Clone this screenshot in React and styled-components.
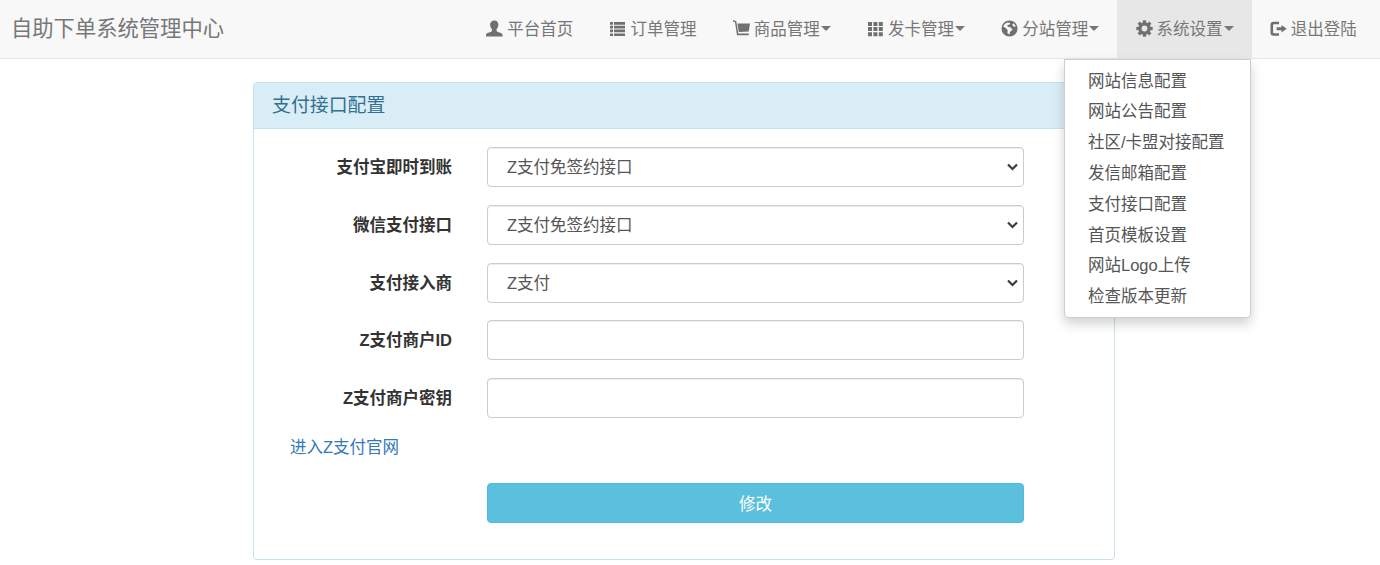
import React from "react";
import styled, { createGlobalStyle } from "styled-components";

const FONT = `"Liberation Sans", "Noto Sans CJK SC", sans-serif`;

const Global = createGlobalStyle`
  html, body { margin: 0; padding: 0; background: #fff; height: 100%; overflow: hidden; }
  body { font-family: ${FONT}; font-size: 16.5px; color: #333; }
  * { box-sizing: border-box; }
`;

const Page = styled.div`
  position: relative;
  width: 1380px;
  height: 565px;
  overflow: hidden;
`;

const Navbar = styled.nav`
  display: flex;
  align-items: stretch;
  justify-content: space-between;
  height: 59px;
  padding: 0 5px 0 11px;
  background: #f8f8f8;
  border-bottom: 1px solid #e7e7e7;
`;

const Brand = styled.a`
  align-self: center;
  margin-top: -6px;
  font-size: 21.3px;
  color: #777;
  white-space: nowrap;
`;

const NavList = styled.ul`
  display: flex;
  margin: 0;
  padding: 0;
  list-style: none;
`;

const NavItem = styled.li`
  position: relative;
  display: flex;
  align-items: center;
  gap: 4px;
  padding: 0 18.15px 2px;
  height: 58px;
  color: #777;
  white-space: nowrap;
  background: ${(p) => (p.$active ? "#e7e7e7" : "transparent")};
`;

const Caret = styled.span`
  display: inline-block;
  width: 0;
  height: 0;
  margin-left: -3px;
  margin-top: 1px;
  border-top: 5px solid #777;
  border-left: 5px solid transparent;
  border-right: 5px solid transparent;
`;

const IconSvg = styled.svg`
  display: block;
  width: 17px;
  height: 17px;
  fill: #707070;
  flex: none;
`;

const Dropdown = styled.ul`
  position: absolute;
  top: 59px;
  left: 1064px;
  z-index: 5;
  width: 187px;
  height: 259px;
  margin: 0;
  padding: 5.6px 0;
  list-style: none;
  background: #fff;
  border: 1px solid #cdcdcd;
  border-radius: 0 0 4px 4px;
  box-shadow: 0 6px 12px rgba(0, 0, 0, 0.175);
`;

const DropdownItem = styled.li`
  height: 30.8px;
  line-height: 30.8px;
  padding-left: 23px;
  color: #555;
  white-space: nowrap;
`;

const Main = styled.main`
  padding: 23px 0 0 253px;
`;

const Panel = styled.section`
  width: 862px;
  height: 478px;
  background: #fff;
  border: 1px solid #c5e4ee;
  border-radius: 4px;
  overflow: hidden;
`;

const PanelHeading = styled.h3`
  margin: 0;
  height: 46px;
  padding-left: 18px;
  line-height: 45px;
  font-size: 18.9px;
  font-weight: 400;
  color: #31708f;
  background: #d9edf7;
  border-bottom: 1px solid #c5e4ee;
`;

const Form = styled.form`
  display: flex;
  flex-direction: column;
  gap: 17.8px;
  padding: 18px 0 0 36px;
`;

const Row = styled.div`
  display: grid;
  grid-template-columns: 162px 537px;
  column-gap: 35px;
  align-items: center;
`;

const Label = styled.label`
  padding: 0 0 2px;
  text-align: right;
  font-weight: 700;
  color: #333;
  white-space: nowrap;
`;

const fieldCss = `
  display: block;
  width: 100%;
  height: 40px;
  background: #fff;
  border: 1px solid #ccc;
  border-radius: 4px;
  box-shadow: inset 0 1px 1px rgba(0, 0, 0, 0.075);
  color: #555;
  font-family: ${FONT};
  font-size: 16.5px;
  outline: none;
`;

const SelectWrap = styled.div`
  position: relative;
  width: 100%;
`;

const Select = styled.select`
  ${fieldCss}
  appearance: none;
  padding: 0 19px;
`;

const Chevron = styled.svg`
  position: absolute;
  top: 16px;
  right: 6px;
  width: 11px;
  height: 8px;
  fill: none;
  stroke: #3c3c3c;
  stroke-width: 2.2;
  pointer-events: none;
`;

const Input = styled.input`
  ${fieldCss}
  padding: 0 19px;
`;

const ExternalLink = styled.a`
  display: block;
  margin-top: -0.5px;
  height: 24px;
  line-height: 24px;
  color: #337ab7;
  white-space: nowrap;
`;

const SubmitRow = styled(Row)`
  margin-top: 6px;
`;

const Submit = styled.button`
  display: block;
  width: 100%;
  height: 40px;
  background: #5bc0de;
  border: 1px solid #4fbbdb;
  border-radius: 4px;
  color: #fff;
  font-family: ${FONT};
  font-size: 16.5px;
`;

const TEETH = [0, 45, 90, 135, 180, 225, 270, 315];

const ICONS = {
  user: (
    <path d="M8.500 .5c2.400 0 3.900 1.700 3.900 4.200 0 1.700-.8 3.500-1.800 4.400v1.600c0 .5.300.8.800 1l3.400 1.400c1 .4 1.700 1.100 1.700 2.200v1.200H0v-1.200c0-1.100.7-1.800 1.700-2.200l3.400-1.400c.5-.2.800-.5.800-1V9.100C4.900 8.200 4.100 6.400 4.100 4.700c0-2.500 1.500-4.200 4.400-4.200z" />
  ),
  list: (
    <path d="M1 2h3v2.700H1zM5 2h11v2.700H5zM1 5.800h3v2.700H1zM5 5.800h11v2.700H5zM1 9.600h3v2.700H1zM5 9.600h11v2.700H5zM1 13.400h3v2.700H1zM5 13.400h11v2.700H5z" />
  ),
  cart: (
    <>
      <path d="M0 0l3.300 1.200 2 12.300h10.500v1.700H4L2 2.300 0 1.400z" />
      <path d="M4.400 3.400H17l-1.300 8.100-9.900.6z" />
    </>
  ),
  grid: (
    <path d="M1 2h4v4H1zM6.400 2h4v4H6.400zM11.800 2h4v4h-4zM1 7.100h4v4H1zM6.400 7.100h4v4H6.400zM11.800 7.100h4v4h-4zM1 12.200h4v4H1zM6.400 12.200h4v4H6.400zM11.800 12.200h4v4h-4z" />
  ),
  globe: (
    <path fillRule="evenodd" d="M8.500.5a8 8 0 1 1 0 16 8 8 0 0 1 0-16zM6.500 2.400C4.400 3 2.900 4.600 2.300 6.700l2.600 1.400 1.900 2.400-.5 2.200 2 2 .8-2.900 2.500-2-1.800-2.400-2.900-.6-.8-1.600 2.100-.4 1.100-1.800-2.600-.6zM12.200 3.200l-1 1.700 1.700 1.800 1.900-.2c-.4-1.300-1.400-2.500-2.600-3.300z" />
  ),
  cog: (
    <>
      <circle cx="8.500" cy="8.500" r="4.600" fill="none" stroke="#707070" strokeWidth="3.400" />
      {TEETH.map((a) => (
        <rect key={a} x="6.900" y=".3" width="3.200" height="3.400" transform={`rotate(${a} 8.500 8.500)`} />
      ))}
    </>
  ),
  logout: (
    <path d="M.5 4.500C.5 3 1.700 1.800 3.200 1.800H9v2.500H4c-.6 0-.9.400-.9.900v7.100c0 .5.300.9.900.9h5v2.500H3.200C1.700 15.700.5 14.500.5 13zM11.500 5l5.200 3.800-5.200 3.700v-2.300H6.600V7.300h4.900z" />
  ),
};

const Icon = ({ name }) => <IconSvg viewBox="0 0 17 17">{ICONS[name]}</IconSvg>;

const NAV = [
  { icon: "user", label: "平台首页" },
  { icon: "list", label: "订单管理" },
  { icon: "cart", label: "商品管理", caret: true },
  { icon: "grid", label: "发卡管理", caret: true },
  { icon: "globe", label: "分站管理", caret: true },
  { icon: "cog", label: "系统设置", caret: true, active: true },
  { icon: "logout", label: "退出登陆" },
];

const MENU = [
  "网站信息配置",
  "网站公告配置",
  "社区/卡盟对接配置",
  "发信邮箱配置",
  "支付接口配置",
  "首页模板设置",
  "网站Logo上传",
  "检查版本更新",
];

const FIELDS = [
  { label: "支付宝即时到账", value: "Z支付免签约接口" },
  { label: "微信支付接口", value: "Z支付免签约接口" },
  { label: "支付接入商", value: "Z支付" },
  { label: "Z支付商户ID" },
  { label: "Z支付商户密钥" },
];

export default function App() {
  return (
    <Page>
      <Global />
      <Navbar>
        <Brand>自助下单系统管理中心</Brand>
        <NavList>
          {NAV.map((item) => (
            <NavItem key={item.label} $active={item.active}>
              <Icon name={item.icon} />
              {item.label}
              {item.caret && <Caret />}
            </NavItem>
          ))}
        </NavList>
      </Navbar>
      <Dropdown>
        {MENU.map((m) => (
          <DropdownItem key={m}>{m}</DropdownItem>
        ))}
      </Dropdown>
      <Main>
        <Panel>
          <PanelHeading>支付接口配置</PanelHeading>
          <Form>
            {FIELDS.map((f) => (
              <Row key={f.label}>
                <Label>{f.label}</Label>
                {f.value ? (
                  <SelectWrap>
                    <Select defaultValue={f.value}>
                      <option>{f.value}</option>
                    </Select>
                    <Chevron viewBox="0 0 11 8">
                      <path d="M1 1.500l4.500 4.500L10 1.500" />
                    </Chevron>
                  </SelectWrap>
                ) : (
                  <Input type="text" />
                )}
              </Row>
            ))}
            <ExternalLink>进入Z支付官网</ExternalLink>
            <SubmitRow>
              <span />
              <Submit type="button">修改</Submit>
            </SubmitRow>
          </Form>
        </Panel>
      </Main>
    </Page>
  );
}
